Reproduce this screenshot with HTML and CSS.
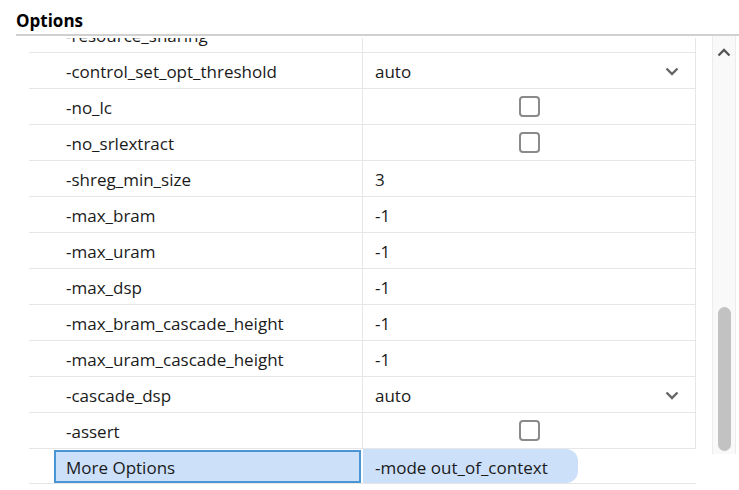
FILE: index.html
```html
<!DOCTYPE html>
<html lang="en">
<head>
    <meta charset="UTF-8">
    <title>Options</title>
    <link rel="stylesheet" href="styles.css">
</head>
<body>
    <div class="panel">
        <h2 class="panel-title">Options</h2>
        <div class="options-area">
            <div class="viewport">
                <div class="table">
                    <div class="row"><div class="name">-resource_sharing</div><div class="value"></div></div>
                    <div class="row"><div class="name">-control_set_opt_threshold</div><div class="value select">auto<span class="chev"><svg width="14" height="9" viewBox="0 0 14 9"><path d="M1.5 1.5 L7 7 L12.5 1.5" fill="none" stroke="#666" stroke-width="2.4"/></svg></span></div></div>
                    <div class="row"><div class="name">-no_lc</div><div class="value check"><span class="box"></span></div></div>
                    <div class="row"><div class="name">-no_srlextract</div><div class="value check"><span class="box"></span></div></div>
                    <div class="row"><div class="name">-shreg_min_size</div><div class="value">3</div></div>
                    <div class="row"><div class="name">-max_bram</div><div class="value">-1</div></div>
                    <div class="row"><div class="name">-max_uram</div><div class="value">-1</div></div>
                    <div class="row"><div class="name">-max_dsp</div><div class="value">-1</div></div>
                    <div class="row"><div class="name">-max_bram_cascade_height</div><div class="value">-1</div></div>
                    <div class="row"><div class="name">-max_uram_cascade_height</div><div class="value">-1</div></div>
                    <div class="row"><div class="name">-cascade_dsp</div><div class="value select">auto<span class="chev"><svg width="14" height="9" viewBox="0 0 14 9"><path d="M1.5 1.5 L7 7 L12.5 1.5" fill="none" stroke="#666" stroke-width="2.4"/></svg></span></div></div>
                    <div class="row"><div class="name">-assert</div><div class="value check"><span class="box"></span></div></div>
                    <div class="row more">
                        <div class="name"><span class="selected">More Options</span></div>
                        <div class="value"><span class="more-value">-mode out_of_context</span></div>
                    </div>
                </div>
            </div>
            <div class="scrollbar">
                <svg class="up" width="14" height="9" viewBox="0 0 14 9"><path d="M1.5 7.5 L7 2 L12.5 7.5" fill="none" stroke="#555" stroke-width="2.4"/></svg>
                <div class="thumb"></div>
            </div>
        </div>
    </div>
</body>
</html>
```

FILE: styles.css
```css
body {
    margin: 0;
    font-family: "Open Sans", "Noto Sans", sans-serif;
    color: #1a1a1a;
    background: #fff;
}
.panel {
    padding: 8px 0 0 16px;
}
.panel-title {
    margin: 0;
    font-size: 17px;
    font-weight: bold;
    line-height: 26px;
    color: #000;
    border-bottom: 2px solid #d0d0d0;
}
.options-area {
    display: flex;
    height: 454px;
    padding-left: 13px;
}
.viewport {
    width: 667px;
    height: 446px;
    margin-top: 2px;
    overflow: hidden;
}
.table {
    margin-top: -21px;
}
.row {
    display: flex;
    height: 36px;
    border-bottom: 1px solid #e6e6e6;
    box-sizing: border-box;
}
.row:last-child {
    height: 35px;
}
.name {
    width: 334px;
    box-sizing: border-box;
    padding: 2px 0 0 37px;
    display: flex;
    align-items: center;
    font-size: 17px;
    border-right: 1px solid #e6e6e6;
    white-space: nowrap;
}
.value {
    flex: 1;
    display: flex;
    align-items: center;
    padding: 2px 0 0 12px;
    font-size: 17px;
    border-right: 1px solid #e6e6e6;
}
.select {
    justify-content: space-between;
    padding-right: 16px;
}
.chev {
    display: flex;
}
.check {
    justify-content: center;
    padding: 0;
}
.box {
    width: 17px;
    height: 17px;
    border: 2px solid #8a8a8a;
    border-radius: 4px;
    margin-left: 1px;
}
.more .name {
    padding: 0 0 0 25px;
    align-items: stretch;
    border-right: none;
}
.selected {
    flex: 1;
    display: flex;
    align-items: center;
    padding: 2px 0 0 10px;
    background: #cce0fa;
    border: 2px solid #4a96d4;
    margin: 1px 2px 0 0;
}
.more .value {
    padding: 0;
    align-items: stretch;
    border-right: none;
}
.more-value {
    display: flex;
    align-items: center;
    padding: 3px 30px 0 12px;
    background: #cce0fa;
    border-radius: 0 12px 12px 0;
}
.scrollbar {
    width: 22px;
    margin-left: 16px;
    height: 418px;
    background: #f9f9f9;
    border-left: 1px solid #ececec;
    border-right: 1px solid #ececec;
    display: flex;
    flex-direction: column;
    align-items: center;
}
.up {
    margin-top: 12px;
}
.thumb {
    width: 13px;
    height: 144px;
    margin-top: 250px;
    background: #c2c2c2;
    border-radius: 7px;
}
```
